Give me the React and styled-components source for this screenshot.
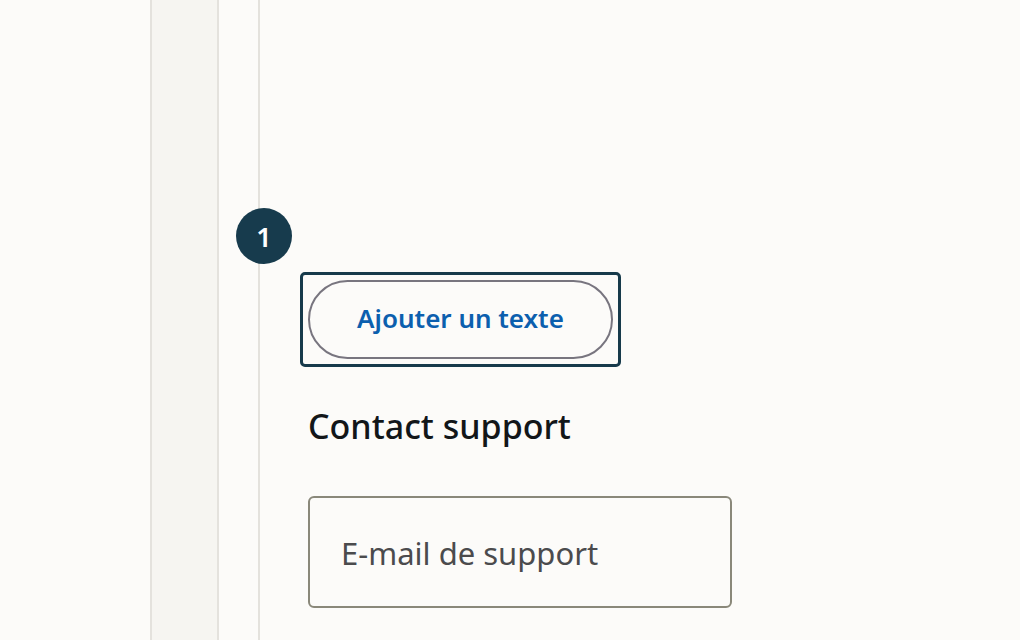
import React from 'react';
import styled, { createGlobalStyle } from 'styled-components';

const GlobalStyle = createGlobalStyle`
  html, body {
    margin: 0;
    padding: 0;
    background: #fcfbf9;
  }
  body {
    font-family: "Noto Sans", "Open Sans", sans-serif;
  }
`;

const Page = styled.div`
  display: flex;
  min-height: 640px;
  background: #fcfbf9;
`;

const Spacer = styled.div`
  width: 150px;
  flex: none;
`;

const Rail = styled.div`
  width: 65px;
  flex: none;
  background: #f6f5f1;
  border-left: 2px solid #e4e2dd;
  border-right: 2px solid #e4e2dd;
`;

const Gutter = styled.div`
  width: 39px;
  flex: none;
  border-right: 2px solid #e4e2dd;
`;

const Content = styled.div`
  position: relative;
  flex: 1;
  padding: 272px 0 0 48px;
`;

const StepBadge = styled.div`
  position: absolute;
  left: -24px;
  top: 208px;
  width: 56px;
  height: 56px;
  border-radius: 50%;
  background: #173b4d;
  color: #ffffff;
  display: flex;
  align-items: center;
  justify-content: center;
  font-size: 27px;
  font-weight: 600;
`;

const FocusRing = styled.div`
  display: inline-flex;
  margin-left: -8px;
  padding: 5px;
  border: 3px solid #173a4b;
  border-radius: 5px;
`;

const PillButton = styled.button`
  width: 305px;
  height: 79px;
  padding: 0 0 3px;
  border: 2px solid #78757f;
  border-radius: 40px;
  background: transparent;
  color: #0c5fae;
  font-family: inherit;
  font-size: 26px;
  font-weight: 600;
  cursor: pointer;
`;

const Heading = styled.h2`
  margin: 38px 0 0;
  font-size: 34px;
  line-height: 42px;
  font-weight: 500;
  color: #121619;
`;

const TextInput = styled.input`
  box-sizing: border-box;
  display: block;
  margin-top: 49px;
  width: 424px;
  height: 112px;
  padding: 2px 31px 0;
  border: 2px solid #8a887a;
  border-radius: 6px;
  background: transparent;
  font-family: inherit;
  font-size: 31px;
  color: #121619;
  outline: none;

  &::placeholder {
    color: #4b4b4d;
  }
`;

const App = () => {
  return (
    <>
      <GlobalStyle />
      <Page>
        <Spacer />
        <Rail />
        <Gutter />
        <Content>
          <StepBadge>1</StepBadge>
          <FocusRing>
            <PillButton type="button">Ajouter un texte</PillButton>
          </FocusRing>
          <Heading>Contact support</Heading>
          <TextInput type="email" placeholder="E-mail de support" />
        </Content>
      </Page>
    </>
  );
};

export default App;
